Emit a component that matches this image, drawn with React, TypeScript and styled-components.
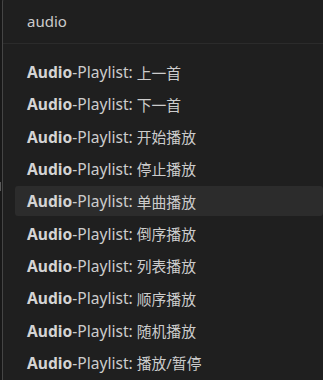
import styled, { createGlobalStyle } from "styled-components";

const GlobalStyle = createGlobalStyle`
  html, body {
    margin: 0;
    padding: 0;
    background: #181818;
    overflow: hidden;
  }
  body {
    font-family: "Noto Sans", "Noto Sans CJK SC", sans-serif;
  }
`;

const commands = [
  "上一首",
  "下一首",
  "开始播放",
  "停止播放",
  "单曲播放",
  "倒序播放",
  "列表播放",
  "顺序播放",
  "随机播放",
  "播放/暂停",
];

const Page = styled.div`
  display: flex;
  width: 323px;
  height: 380px;
  overflow: hidden;
`;

const Gutter = styled.div`
  position: relative;
  width: 2px;
  flex-shrink: 0;
  background: #181818;
`;

// editor scrollbar peeking out behind the widget
const ScrollMark = styled.div`
  position: absolute;
  left: 0;
  top: 182px;
  width: 1px;
  height: 9px;
  border: 1px solid #5a5a5a;
  border-left: none;
  box-sizing: border-box;
`;

const Widget = styled.div`
  flex: 1;
  margin-top: -4px;
  background: #1f1f1f;
  border-left: 1px solid #454545;
  border-top: 1px solid #454545;
  border-top-left-radius: 6px;
  overflow: hidden;
`;

const InputRow = styled.div`
  height: 47px;
  box-sizing: border-box;
  display: flex;
  align-items: center;
  padding-left: 24px;
  padding-top: 1px;
  border-bottom: 1px solid #2b2b2b;
  color: #cccccc;
  font-size: 15px;
`;

const List = styled.div`
  display: flex;
  flex-direction: column;
  gap: 2.33px;
  padding-top: 13px;
`;

const Row = styled.div<{ $active?: boolean }>`
  height: 30px;
  margin-left: 12px;
  padding-left: 12px;
  display: flex;
  align-items: center;
  border-radius: 3px;
  background: ${(p) => (p.$active ? "#2c2c2c" : "transparent")};
  color: #cccccc;
  font-size: 15.6px;
  white-space: pre;
`;

const Match = styled.b`
  font-weight: 700;
  color: #d4d4d4;
`;

const Name = styled.span`
  font-size: 14.8px;
`;

export default function App() {
  return (
    <>
      <GlobalStyle />
      <Page>
        <Gutter>
          <ScrollMark />
        </Gutter>
        <Widget>
          <InputRow>audio</InputRow>
          <List>
            {commands.map((c, i) => (
              <Row key={c} $active={i === 4}>
                <Match>Audio</Match>-Playlist: <Name>{c}</Name>
              </Row>
            ))}
          </List>
        </Widget>
      </Page>
    </>
  );
}
